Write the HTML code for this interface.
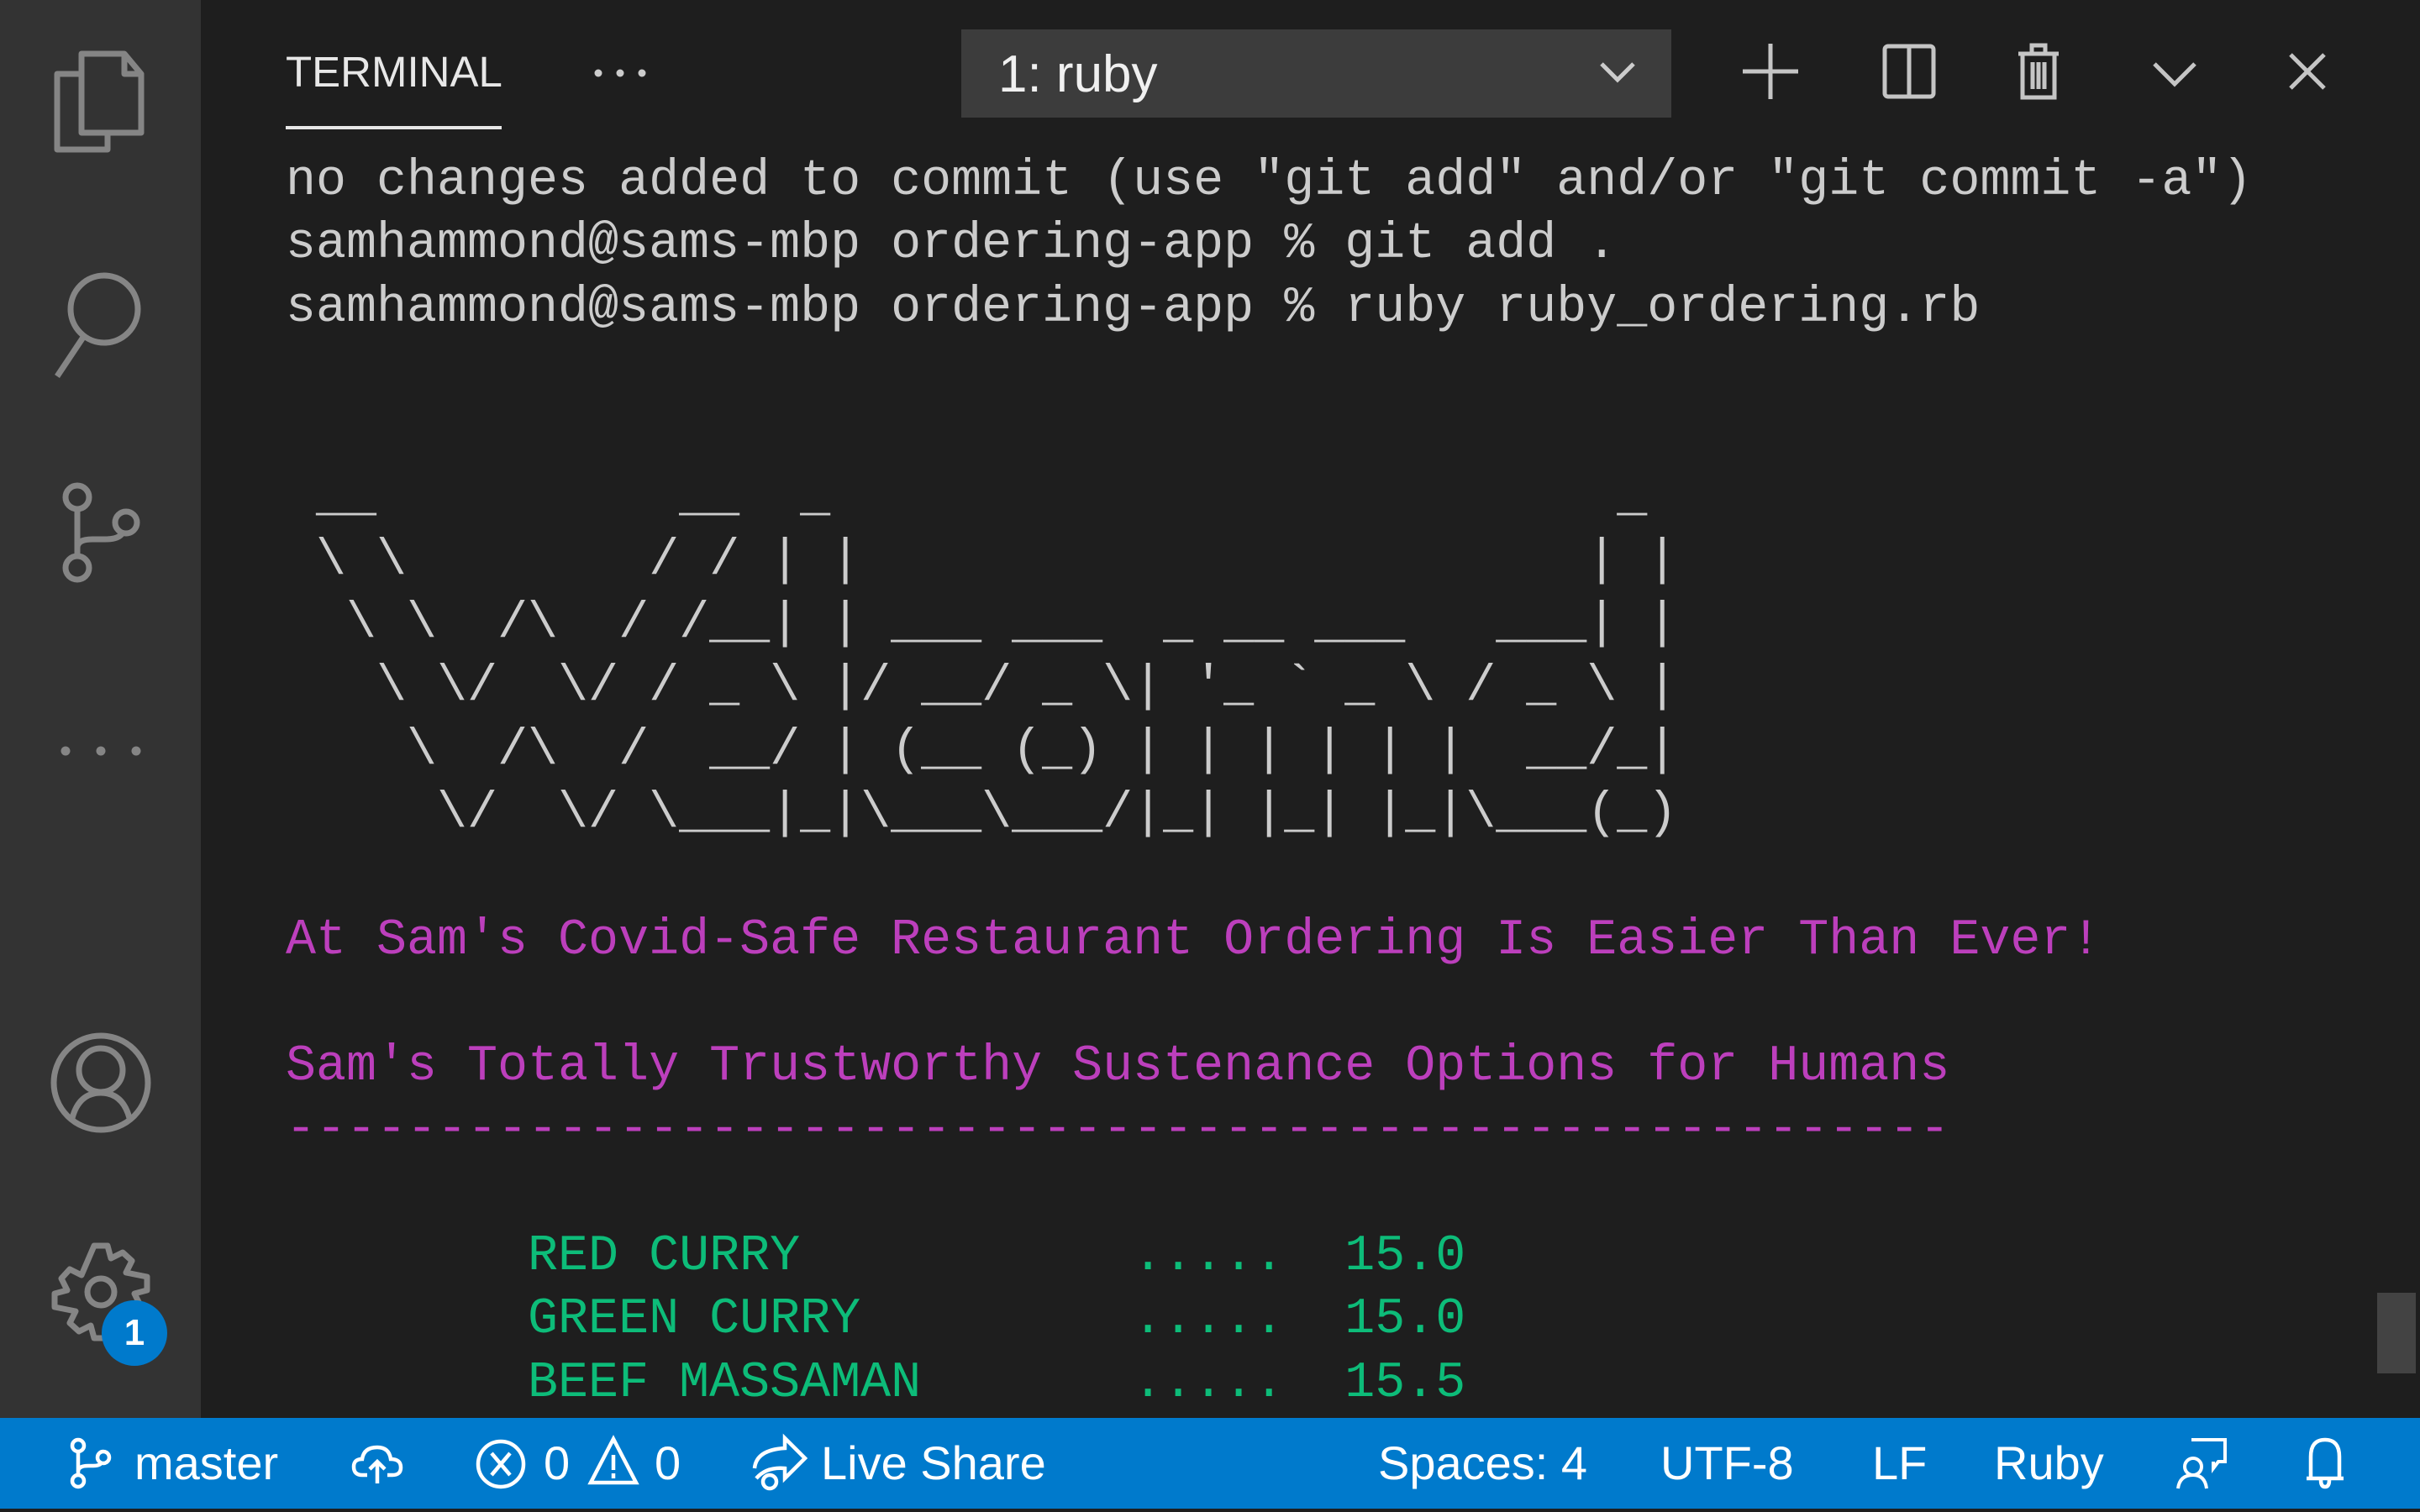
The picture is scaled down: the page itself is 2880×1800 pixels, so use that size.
<!DOCTYPE html>
<html><head><meta charset="utf-8"><style>
html,body{margin:0;padding:0;width:2880px;height:1800px;overflow:hidden;background:#1e1e1e;}
.ab{position:absolute;left:0;top:0;width:239px;height:1688px;background:#333333;}
.term{position:absolute;left:340px;top:174px;margin:0;font-family:"Liberation Mono",monospace;font-size:60px;line-height:75.3px;color:#cccccc;white-space:pre;}
.m{color:#bc3fbc}.g{color:#0dbc79}
.ui{font-family:"Liberation Sans",sans-serif;position:absolute;}
.sb{position:absolute;left:0;top:1688px;width:2880px;height:108px;background:#007acc;}
.bot{position:absolute;left:0;top:1796px;width:2880px;height:4px;background:#1e1e1e;}
.st{position:absolute;top:1710px;font-family:"Liberation Sans",sans-serif;font-size:56px;line-height:64px;color:#fff;}
svg{position:absolute;overflow:visible}
</style></head><body>
<div class="ab"></div>
<svg style="left:64px;top:58px" width="110" height="120" viewBox="0 0 110 120" fill="none" stroke="#858585" stroke-width="7" stroke-linejoin="round">
<path d="M33 6 H84 L104 30 V100 H33 Z"/><path d="M33 30 H4 V120 H64 V100"/><path d="M84 6 V30 H104"/></svg>
<svg style="left:64px;top:318px" width="116" height="120" viewBox="0 0 116 120" fill="none" stroke="#858585" stroke-width="7">
<circle cx="60" cy="50" r="40"/><path d="M36 82 L4 130"/></svg>
<svg style="left:70px;top:574px" width="100" height="130" viewBox="0 0 100 130" fill="none" stroke="#858585" stroke-width="7">
<circle cx="22" cy="18" r="14"/><circle cx="22" cy="102" r="14"/><circle cx="80" cy="48" r="13"/><path d="M22 32 V88"/><path d="M22 78 Q22 68 40 68 H55 Q72 68 76 60"/></svg>
<svg style="left:70px;top:886px" width="100" height="16" viewBox="0 0 100 16" fill="#858585"><circle cx="8" cy="8" r="5.5"/><circle cx="50" cy="8" r="5.5"/><circle cx="92" cy="8" r="5.5"/></svg>
<svg style="left:60px;top:1229px" width="120" height="120" viewBox="0 0 120 120" fill="none" stroke="#858585" stroke-width="7">
<circle cx="60" cy="60" r="56"/><circle cx="60" cy="45" r="26"/><path d="M26 102 Q34 72 60 72 Q86 72 94 102"/></svg>
<svg style="left:60px;top:1478px" width="120" height="120" viewBox="-60 -60 120 120" fill="none" stroke="#858585" stroke-width="7" stroke-linejoin="round">
<path d="M-8 -55 H8 L12 -40 L26 -47 L37 -37 L30 -23 L55 -18 V-2 L40 2 L47 16 L37 27 L23 20 L18 55 H-8 L-12 40 L-26 47 L-37 37 L-30 23 L-55 18 V2 L-40 -2 L-47 -16 L-37 -27 L-23 -20 Z"/><circle cx="0" cy="0" r="16"/></svg>
<div class="ui" style="left:121px;top:1548px;width:78px;height:78px;border-radius:50%;background:#007acc;color:#fff;font-size:44px;font-weight:bold;line-height:78px;text-align:center;">1</div>

<div class="ui" style="left:340px;top:56px;font-size:51px;line-height:60px;color:#e7e7e7;">TERMINAL</div>
<div style="position:absolute;left:340px;top:150px;width:257px;height:4px;background:#e7e7e7;"></div>
<svg style="left:707px;top:81px" width="62" height="12" viewBox="0 0 62 12" fill="#cccccc"><circle cx="5" cy="6" r="4.5"/><circle cx="31" cy="6" r="4.5"/><circle cx="57" cy="6" r="4.5"/></svg>
<div style="position:absolute;left:1144px;top:35px;width:845px;height:105px;background:#3c3c3c;"></div>
<div class="ui" style="left:1188px;top:53px;font-size:62px;line-height:72px;color:#f0f0f0;">1: ruby</div>
<svg style="left:1904px;top:74px" width="42" height="24" viewBox="0 0 42 24" fill="none" stroke="#cccccc" stroke-width="5"><path d="M2 2 L21 21 L40 2"/></svg>
<svg style="left:2074px;top:52px" width="66" height="66" viewBox="0 0 66 66" fill="none" stroke="#c5c5c5" stroke-width="5"><path d="M33 0 V66 M0 33 H66"/></svg>
<svg style="left:2240px;top:52px" width="64" height="66" viewBox="0 0 64 66" fill="none" stroke="#c5c5c5" stroke-width="5"><rect x="3" y="3" width="58" height="60" rx="4"/><path d="M32 3 V63"/></svg>
<svg style="left:2400px;top:50px" width="52" height="70" viewBox="0 0 52 70" fill="none" stroke="#c5c5c5" stroke-width="5"><path d="M2 14 H50 M18 14 V4 H34 V14 M7 14 V66 H45 V14 M19 24 V56 M26 24 V56 M33 24 V56"/></svg>
<svg style="left:2562px;top:74px" width="52" height="28" viewBox="0 0 52 28" fill="none" stroke="#c5c5c5" stroke-width="5"><path d="M2 2 L26 26 L50 2"/></svg>
<svg style="left:2724px;top:63px" width="44" height="44" viewBox="0 0 44 44" fill="none" stroke="#c5c5c5" stroke-width="5"><path d="M2 2 L42 42 M42 2 L2 42"/></svg>

<div style="position:absolute;left:240px;top:160px;width:2640px;height:1528px;overflow:hidden;">
<pre class="term" style="left:100px;top:19px;">no changes added to commit (use "git add" and/or "git commit -a")
samhammond@sams-mbp ordering-app % git add .
samhammond@sams-mbp ordering-app % ruby ruby_ordering.rb


 __          __  _                          _
 \ \        / / | |                        | |
  \ \  /\  / /__| | ___ ___  _ __ ___   ___| |
   \ \/  \/ / _ \ |/ __/ _ \| '_ ` _ \ / _ \ |
    \  /\  /  __/ | (__ (_) | | | | | |  __/_|
     \/  \/ \___|_|\___\___/|_| |_| |_|\___(_)

<span class="m">At Sam's Covid-Safe Restaurant Ordering Is Easier Than Ever!</span>

<span class="m">Sam's Totally Trustworthy Sustenance Options for Humans</span>
<span class="m">-------------------------------------------------------</span>

<span class="g">        RED CURRY           .....  15.0</span>
<span class="g">        GREEN CURRY         .....  15.0</span>
<span class="g">        BEEF MASSAMAN       .....  15.5</span>
</pre>
</div>
<div style="position:absolute;left:2829px;top:1539px;width:46px;height:96px;background:#434343;"></div>

<div class="sb"></div><div class="bot"></div>
<svg style="left:83px;top:1712px" width="52" height="60" viewBox="0 0 52 60" fill="none" stroke="#fff" stroke-width="4.5"><circle cx="10" cy="9" r="7"/><circle cx="10" cy="51" r="7"/><circle cx="40" cy="23" r="7"/><path d="M10 16 V44 M10 40 Q10 33 22 33 H28 Q36 33 38 29"/></svg>
<div class="st" style="left:160px;">master</div>
<svg style="left:419px;top:1720px" width="60" height="46" viewBox="0 0 60 46" fill="none" stroke="#fff" stroke-width="4.5"><path d="M18 36 H12 Q2 36 2 26 Q2 17 12 17 Q14 3 30 3 Q44 3 46 17 Q58 17 58 27 Q58 36 48 36 H42"/><path d="M30 46 V20 M21 29 L30 20 L39 29"/></svg>
<svg style="left:566px;top:1713px" width="60" height="60" viewBox="0 0 60 60" fill="none" stroke="#fff" stroke-width="4.5"><circle cx="30" cy="30" r="27"/><path d="M19 17 L41 43 M41 17 L19 43"/></svg>
<div class="st" style="left:647px;">0</div>
<svg style="left:700px;top:1710px" width="60" height="58" viewBox="0 0 60 58" fill="none" stroke="#fff" stroke-width="4.5"><path d="M30 3 L57 55 H3 Z"/><path d="M30 22 V40 M30 44 V50"/></svg>
<div class="st" style="left:779px;">0</div>
<svg style="left:896px;top:1708px" width="64" height="66" viewBox="0 0 64 66" fill="none" stroke="#fff" stroke-width="4.5"><path d="M2 40 Q4 18 38 16 V4 L62 28 L38 52 V40 Q16 38 4 52"/><circle cx="20" cy="56" r="8"/></svg>
<div class="st" style="left:977px;">Live Share</div>
<div class="st" style="left:1640px;">Spaces: 4</div>
<div class="st" style="left:1976px;">UTF-8</div>
<div class="st" style="left:2228px;">LF</div>
<div class="st" style="left:2373px;">Ruby</div>
<svg style="left:2590px;top:1710px" width="60" height="64" viewBox="0 0 60 64" fill="none" stroke="#fff" stroke-width="4"><path d="M18 4 H58 V30 H50 L44 38 V30"/><circle cx="20" cy="36" r="10"/><path d="M2 62 Q4 46 20 46 Q34 46 36 62"/></svg>
<svg style="left:2742px;top:1710px" width="50" height="64" viewBox="0 0 50 64" fill="none" stroke="#fff" stroke-width="4.5"><path d="M8 50 V24 Q8 4 25 4 Q42 4 42 24 V50 Z M3 50 H47"/><path d="M20 52 Q20 60 25 60 Q30 60 30 52"/></svg>
</body></html>
